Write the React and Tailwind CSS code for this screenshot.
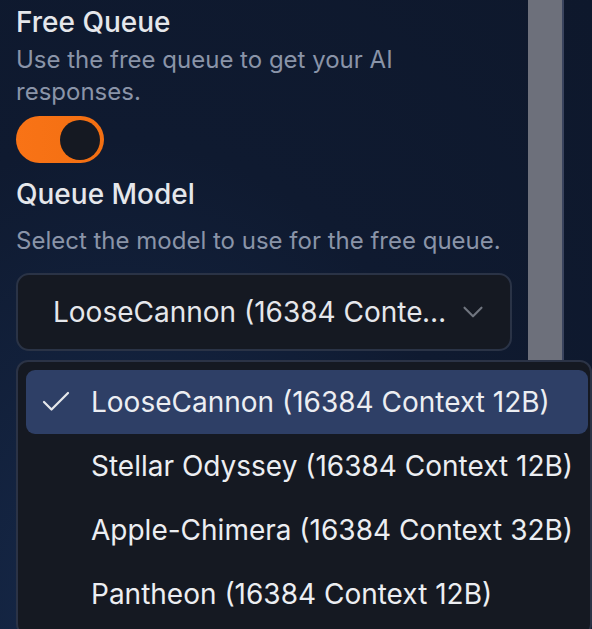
import React from 'react';
import { Check, ChevronDown } from 'lucide-react';

const models = [
  'LooseCannon (16384 Context 12B)',
  'Stellar Odyssey (16384 Context 12B)',
  'Apple-Chimera (16384 Context 32B)',
  'Pantheon (16384 Context 12B)',
];

const App = () => {
  const selected = models[0];

  return (
    <div
      className="relative h-[629px] w-[592px] overflow-hidden bg-[radial-gradient(ellipse_at_20%_100%,#16294a_0%,#0f1a30_55%,#0e182c_100%)] text-[#e5e7eb]"
      style={{ fontFamily: 'Inter, "Noto Sans", sans-serif' }}
    >
      <div className="flex h-full">
        {/* Settings column */}
        <div className="w-[528px] shrink-0 pl-4 pr-4 pt-1">
          <h3 className="text-[28px] font-medium leading-[36px]">Free Queue</h3>
          <p className="mt-1 text-[24px] leading-[32px] text-[#8a94a8]">
            Use the free queue to get your AI responses.
          </p>
          <button className="mt-2 flex h-[47px] w-[88px] items-center rounded-full bg-gradient-to-r from-[#f97316] to-[#f26f12] pl-[44px]">
            <span className="h-[40px] w-[40px] rounded-full bg-[#151922]" />
          </button>

          <h3 className="mt-[13px] text-[28px] font-medium leading-[36px]">Queue Model</h3>
          <p className="mt-[13px] text-[24px] leading-[32px] text-[#8a94a8]">
            Select the model to use for the free queue.
          </p>

          <button className="mt-4 flex h-[78px] w-[496px] items-center rounded-[13px] border-2 border-[#2a3346] bg-[#151922] pl-[35px] pr-[20px]">
            <span className="w-[395px] truncate text-left text-[28px] leading-[36px] text-[#e5e7eb]">
              {selected}
            </span>
            <ChevronDown size={34} strokeWidth={1.5} className="ml-auto text-[#70757f]" />
          </button>
        </div>

        {/* Scrollbar */}
        <div className="h-full w-[34px] shrink-0 bg-[#6d707b]" />
        <div className="h-full w-[2px] shrink-0 bg-[#3a445e]" />
      </div>

      {/* Open dropdown menu */}
      <div className="absolute left-4 top-[360px] w-[576px] rounded-[12px] border-2 border-[#2b3346] bg-[#151922] py-2 pl-2 pr-[2px]">
        {models.map((model) => {
          const active = model === selected;
          return (
            <div
              key={model}
              className={`flex h-[64px] items-center rounded-[9px] pl-3 ${active ? 'bg-[#2e3f66]' : ''}`}
            >
              <span className="flex w-[36px] shrink-0 items-center">
                {active && <Check size={36} strokeWidth={1.5} className="text-[#e5e7eb]" />}
              </span>
              <span className="ml-[17px] text-[28px] leading-[36px] text-[#eceef2]">{model}</span>
            </div>
          );
        })}
      </div>
    </div>
  );
};

export default App;
